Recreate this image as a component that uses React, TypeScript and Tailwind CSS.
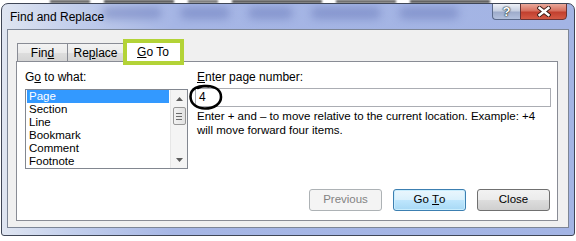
import React from 'react';

const font = { fontFamily: '"Liberation Sans", Arial, sans-serif' };

const items = ["Page", "Section", "Line", "Bookmark", "Comment", "Footnote"];

const btnBase =
  "h-[22px] w-[73px] rounded-[3px] border flex items-center justify-center text-[11.5px] leading-none";

const App = () => {
  return (
    <div className="relative w-[576px] h-[241px] overflow-hidden bg-white" style={font}>
      {/* blurred document behind the dialog */}
      <div className="absolute left-0 top-0 w-full h-[4px] flex gap-[14px] pl-[50px] blur-[1px]">
        <div className="w-[40px] h-[3px] bg-[#555]" />
        <div className="w-[70px] h-[3px] bg-[#444]" />
        <div className="w-[30px] h-[3px] bg-[#666]" />
        <div className="w-[90px] h-[3px] bg-[#444]" />
        <div className="w-[60px] h-[3px] bg-[#555]" />
        <div className="w-[80px] h-[3px] bg-[#444]" />
      </div>

      <div className="relative ml-[1px] mt-[3px] w-[574px] h-[233px] rounded-t-[7px] rounded-b-[3px] border border-[#3f4656] bg-[linear-gradient(90deg,#dfe5f1_0%,#c3cfec_12%,#a6b6e5_30%,#a3b4e4_100%)] px-[5px] pb-[7px] flex flex-col overflow-hidden">
        {/* glass blobs */}
        <div className="absolute left-[100px] top-[3px] flex gap-[18px] blur-[4px] opacity-50">
          <div className="w-[60px] h-[12px] rounded-full bg-[#6878b8]" />
          <div className="w-[50px] h-[12px] rounded-full bg-[#6878b8]" />
          <div className="w-[45px] h-[12px] rounded-full bg-[#6878b8]" />
          <div className="w-[70px] h-[12px] rounded-full bg-[#6878b8]" />
          <div className="w-[60px] h-[12px] rounded-full bg-[#6878b8]" />
        </div>

        {/* title bar */}
        <div className="relative h-[25px] flex items-start justify-between">
          <div className="self-center pl-[3px] pt-[1px] text-[12px] text-black">Find and Replace</div>
          <div className="flex mr-[2px] -mt-[1px]">
            <div className="h-[17px] w-[28px] rounded-bl-[4px] border border-r-0 border-[#5a6a8a] bg-[linear-gradient(180deg,#eef1f7_0%,#c7d0e2_45%,#9eaccb_55%,#b3c1de_100%)] flex items-center justify-center">
              <span className="text-[13px] font-bold leading-none text-white [text-shadow:0_0_1px_#233,0_0_1px_#233,0_0_2px_#233]">?</span>
            </div>
            <div className="h-[17px] w-[47px] rounded-br-[4px] border border-[#6b3434] bg-[linear-gradient(180deg,#e9a99b_0%,#d7705f_45%,#c2402f_55%,#d45a45_100%)] flex items-center justify-center">
              <svg width="14" height="11" viewBox="0 0 14 11">
                <path d="M2.5 2 L11.5 9 M11.5 2 L2.5 9" stroke="#3a1a14" strokeWidth="4.2" strokeLinecap="square" />
                <path d="M2.5 2 L11.5 9 M11.5 2 L2.5 9" stroke="#fff" strokeWidth="2.4" strokeLinecap="square" />
              </svg>
            </div>
          </div>
        </div>

        {/* client area */}
        <div className="relative flex-1 border border-[#7d8696] bg-[#f0f0f0] pl-[8px] pr-[10px] pt-[10px] pb-[6px] flex flex-col">
          {/* tabs */}
          <div className="flex items-end ml-[1px] -mb-[1px] relative z-10 text-[12px] text-black">
            <div className="h-[19px] w-[51px] border border-[#898c95] bg-[linear-gradient(180deg,#f3f3f3_0%,#ebebeb_50%,#dedede_51%,#d4d4d4_100%)] flex items-center justify-center">
              Fin<span className="underline">d</span>
            </div>
            <div className="h-[19px] w-[56px] border border-l-0 border-[#898c95] bg-[linear-gradient(180deg,#f3f3f3_0%,#ebebeb_50%,#dedede_51%,#d4d4d4_100%)] flex items-center justify-center">
              Re<span className="underline">p</span>lace
            </div>
            <div className="relative h-[22px] w-[58px] border border-b-0 border-[#898c95] bg-white flex items-center justify-center pt-[1px]">
              <span><span className="underline">G</span>o To</span>
              <div className="absolute -left-[2px] -top-[2px] -right-[3px] -bottom-[3px] border-[4px] border-[#b3d337]" />
            </div>
          </div>

          {/* tab panel */}
          <div className="flex-1 border border-[#898c95] bg-white pl-[8px] pr-[6px] pt-[8px] pb-[9px] flex flex-col text-[12px] text-black">
            <div className="flex gap-[7px]">
              {/* go to what */}
              <div className="w-[163px] flex flex-col">
                <div className="h-[15px] leading-[15px]">G<span className="underline">o</span> to what:</div>
                <div className="mt-[4px] h-[80px] border border-[#828790] flex">
                  <div className="flex-1 flex flex-col text-[11.5px]">
                    {items.map((it, i) => (
                      <div
                        key={it}
                        className={
                          i === 0
                            ? "h-[13px] leading-[13px] mx-[1px] pl-[2px] bg-[#3399ff] text-white"
                            : "h-[13px] leading-[13px] mx-[1px] pl-[2px]"
                        }
                      >
                        {it}
                      </div>
                    ))}
                  </div>
                  {/* scrollbar */}
                  <div className="w-[17px] bg-[#f4f4f4] border-l border-[#e6e6e6] flex flex-col items-center">
                    <div className="h-[17px] flex items-center justify-center">
                      <svg width="7" height="4" viewBox="0 0 7 4"><path d="M0 4 L3.5 0 L7 4 Z" fill="#5d5d5d" /></svg>
                    </div>
                    <div className="h-[18px] w-[13px] rounded-[2px] border border-[#979797] bg-[linear-gradient(90deg,#f2f2f2,#e2e2e2)] flex flex-col items-center justify-center gap-[2px]">
                      <div className="w-[6px] h-[1px] bg-[#6b6b6b]" />
                      <div className="w-[6px] h-[1px] bg-[#6b6b6b]" />
                      <div className="w-[6px] h-[1px] bg-[#6b6b6b]" />
                    </div>
                    <div className="flex-1" />
                    <div className="h-[17px] flex items-center justify-center">
                      <svg width="7" height="4" viewBox="0 0 7 4"><path d="M0 0 L3.5 4 L7 0 Z" fill="#5d5d5d" /></svg>
                    </div>
                  </div>
                </div>
              </div>

              {/* page number */}
              <div className="flex-1 flex flex-col">
                <div className="h-[15px] leading-[15px] pl-[2px]"><span className="underline">E</span>nter page number:</div>
                <div className="relative mt-[3px] h-[19px] border border-[#abadb3] pl-[3px] leading-[17px]">
                  4
                  <svg className="absolute -left-[8px] -top-[6px]" width="36" height="28" viewBox="0 0 36 28">
                    <path
                      d="M21 3.5 C10 1.5 2.5 6 2.5 13.5 C2.5 21 9 25.5 17 25.5 C26 25.5 33 21 33 14 C33 7 27 3.5 19 3 C15 2.8 12 3.8 10 5"
                      fill="none"
                      stroke="#000"
                      strokeWidth="2.6"
                      strokeLinecap="round"
                    />
                  </svg>
                </div>
                <div className="mt-[2px] pl-[2px] leading-[14px] whitespace-nowrap text-[11.5px]">
                  Enter + and – to move relative to the current location. Example: +4
                  <br />
                  will move forward four items.
                </div>
              </div>
            </div>

            {/* buttons */}
            <div className="mt-auto flex justify-end gap-[11px] pr-[1px]">
              <div className={`${btnBase} border-[#adb2b5] bg-[#f4f4f4] text-[#838383]`}>
                Previous
              </div>
              <div className={`${btnBase} border-[#3c7fb1] bg-[linear-gradient(180deg,#eaf6fd_0%,#d9f0fc_50%,#bee6fd_51%,#a7d9f5_100%)] shadow-[inset_0_0_0_1px_#c9edfd] text-black`}>
                Go&nbsp;<span className="underline">T</span>o
              </div>
              <div className={`${btnBase} border-[#707070] bg-[linear-gradient(180deg,#f2f2f2_0%,#ebebeb_50%,#dddddd_51%,#cfcfcf_100%)] text-black`}>
                Close
              </div>
            </div>
          </div>
        </div>
      </div>
    </div>
  );
};

export default App;
